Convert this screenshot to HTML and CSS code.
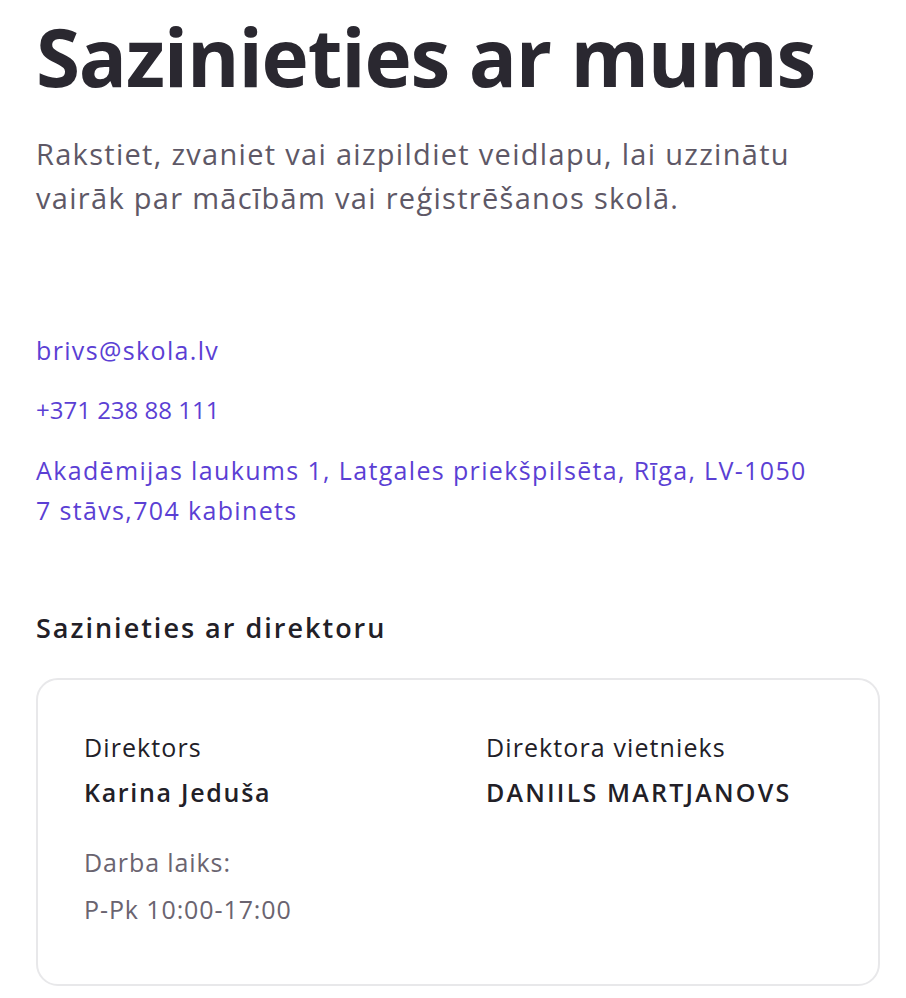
FILE: index.html
```html
<!DOCTYPE html>
<html lang="lv">
<head>
<meta charset="utf-8">
<title>Sazinieties ar mums</title>
<link rel="stylesheet" href="styles.css">
</head>
<body>
<main class="page">
  <h1 class="title">Sazinieties ar mums</h1>
  <p class="lead">Rakstiet, zvaniet vai aizpildiet veidlapu, lai uzzinātu vairāk par mācībām vai reģistrēšanos skolā.</p>

  <ul class="contacts">
    <li><a class="link" href="#">brivs@skola.lv</a></li>
    <li><a class="link link--digits" href="#">+371 238 88 111</a></li>
    <li><a class="link" href="#">Akadēmijas laukums 1, Latgales priekšpilsēta, Rīga, LV-1050<br>7 stāvs,704 kabinets</a></li>
  </ul>

  <h2 class="subtitle">Sazinieties ar direktoru</h2>

  <section class="card">
    <div class="person">
      <div class="role">Direktors</div>
      <div class="name">Karina Jeduša</div>
      <div class="hours">
        <div>Darba laiks:</div>
        <div>P-Pk 10:00-17:00</div>
      </div>
    </div>
    <div class="person">
      <div class="role">Direktora vietnieks</div>
      <div class="name name--caps">DANIILS MARTJANOVS</div>
    </div>
  </section>
</main>
</body>
</html>
```
FILE: styles.css
```css
* { box-sizing: border-box; }
html, body { margin: 0; padding: 0; background: #fff; }
body {
  font-family: "Open Sans", "DejaVu Sans", sans-serif;
  color: #2a2830;
}
.page {
  padding: 8px 26px 0 36px;
}
.title {
  margin: 0;
  font-size: 80px;
  line-height: 96px;
  font-weight: 700;
  color: #2a2830;
  letter-spacing: -1.2px;
}
.lead {
  margin: 28px 0 0;
  font-size: 29px;
  line-height: 44px;
  letter-spacing: 1.3px;
  color: #5e5866;
  max-width: 780px;
}
.contacts {
  list-style: none;
  margin: 110px 0 0;
  padding: 0;
  display: flex;
  flex-direction: column;
  gap: 20px;
}
.link {
  color: #5b3fd4;
  text-decoration: none;
  font-size: 25px;
  line-height: 40px;
  letter-spacing: 1.35px;
}
.link--digits {
  font-size: 24px;
  letter-spacing: 0;
}
.subtitle {
  margin: 78px 0 0;
  font-size: 27px;
  line-height: 40px;
  font-weight: 600;
  letter-spacing: 2px;
  color: #222027;
}
.card {
  margin-top: 30px;
  border: 2px solid #e8e8ea;
  border-radius: 22px;
  padding: 47px 46px 52px;
  display: grid;
  grid-template-columns: 402px 1fr;
  height: 308px;
}
.role {
  font-size: 25px;
  line-height: 40px;
  letter-spacing: 1.1px;
  color: #222027;
}
.name {
  margin-top: 5px;
  font-size: 25px;
  line-height: 40px;
  font-weight: 600;
  letter-spacing: 1.7px;
  color: #222027;
}
.name--caps {
  letter-spacing: 2.2px;
}
.hours {
  margin-top: 27px;
  font-size: 25px;
  line-height: 47px;
  letter-spacing: 0.9px;
  color: #6a6470;
}
```
